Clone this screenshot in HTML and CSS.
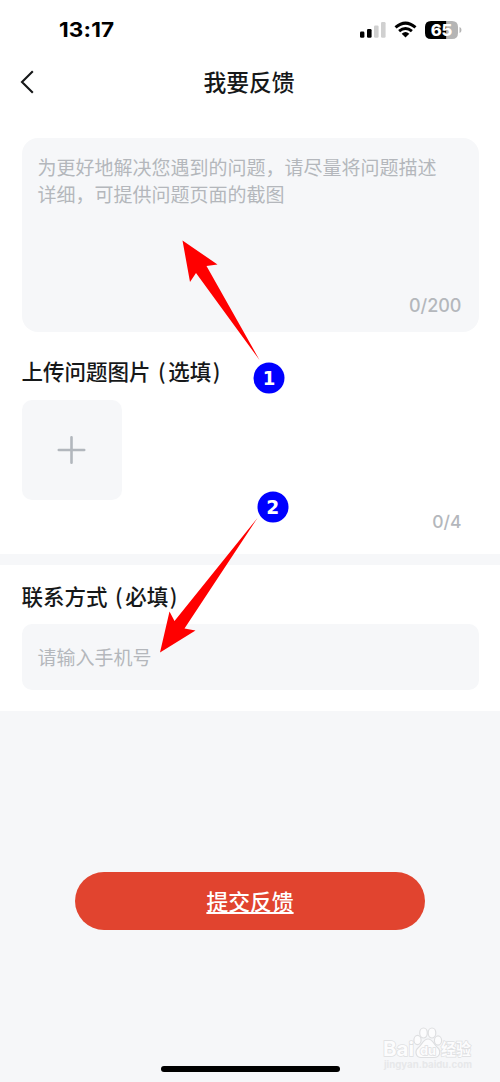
FILE: index.html
```html
<!DOCTYPE html>
<html lang="zh-CN">
<head>
<meta charset="utf-8">
<title>我要反馈</title>
<link rel="stylesheet" href="styles.css">
</head>
<body>
<main class="screen">
  <div class="status-bar">
    <span class="time">13:17</span>
    <svg class="status-icons" width="106" height="24" viewBox="0 0 106 24">
      <rect x="0" y="13.5" width="4.4" height="6.3" rx="1.3" fill="#000"/>
      <rect x="7" y="11" width="4.6" height="8.8" rx="1.3" fill="#000"/>
      <rect x="14" y="7.5" width="4.6" height="12.3" rx="1.3" fill="#d0d0d0"/>
      <rect x="21" y="4" width="4.6" height="15.8" rx="1.3" fill="#d0d0d0"/>
      <path d="M35.5 9.4Q45.5 .8 55.5 9.4M39.1 13.2Q45.5 7.9 51.9 13.2" fill="none" stroke="#000" stroke-width="3"/>
      <path d="M41.7 15.8Q45.5 12.4 49.3 15.8L45.5 19.6Z" fill="#000"/>
      <path d="M71 3H86.5V21H71Q65 21 65 15V9Q65 3 71 3Z" fill="#000"/>
      <path d="M86.5 3H92Q98 3 98 9V15Q98 21 92 21H86.5Z" fill="#b5b5b5"/>
      <path d="M99.5 9Q101.5 9.5 101.5 12T99.5 15Z" fill="#b5b5b5"/>
      <text class="battery-level" x="81.5" y="17.6" text-anchor="middle">65</text>
    </svg>
  </div>
  <header class="nav">
    <svg class="back" width="18" height="26" viewBox="0 0 18 26"><path d="M14.8 2.2L4 13L14.8 23.8" fill="none" stroke="#161819" stroke-width="2.1"/></svg>
    <h1 class="title">我要反馈</h1>
  </header>
  <section class="feedback">
    <div class="textarea">
      <p class="placeholder">为更好地解决您遇到的问题，请尽量将问题描述详细，可提供问题页面的截图</p>
      <span class="counter">0/200</span>
    </div>
    <h2 class="heading">上传问题图片<span class="paren-open">(</span>选填<span class="paren-close">)</span></h2>
    <div class="upload">
      <svg width="30" height="30" viewBox="0 0 30 30"><path d="M14.5 2.3V27.7M1.8 15H27.2" fill="none" stroke="#b2b7bd" stroke-width="2.6" stroke-linecap="round"/></svg>
    </div>
    <div class="image-count">0/4</div>
  </section>
  <section class="contact">
    <h2 class="heading">联系方式<span class="paren-open">(</span>必填<span class="paren-close">)</span></h2>
    <div class="phone">请输入手机号</div>
  </section>
  <footer class="footer">
    <a class="submit">提交反馈</a>
    <div class="home-indicator"></div>
  </footer>
  <svg class="annotations" width="500" height="1082" viewBox="0 0 500 1082">
    <path d="M259.5 360L206.5 266L217.5 264.5L182.5 240.5L190 282L196 273Z" fill="#f00"/>
    <path d="M257.5 518L174.5 621L169.5 611.5L160 652.5L195.5 630.5L184.5 628.5Z" fill="#f00"/>
    <circle cx="269" cy="378" r="15.5" fill="#00f"/>
    <circle cx="273" cy="507" r="15.5" fill="#00f"/>
    <text class="marker" x="262.8" y="385" textLength="12.6" lengthAdjust="spacingAndGlyphs">1</text>
    <text class="marker" x="266.3" y="514" textLength="13" lengthAdjust="spacingAndGlyphs">2</text>
  </svg>
  <svg class="watermark" width="112" height="56" viewBox="0 0 112 56">
    <g fill="#fcfcfd" stroke="#dedfe1" stroke-width="1.2">
      <ellipse cx="46.5" cy="20" rx="3.6" ry="4.6"/>
      <ellipse cx="52.5" cy="13" rx="3.8" ry="5"/>
      <ellipse cx="61" cy="13" rx="3.8" ry="5"/>
      <ellipse cx="67" cy="20.5" rx="3.6" ry="4.6"/>
      <path d="M57 19C52 19 51 25 47.5 27.5C43 31 45 37.5 50 37.5H63C69 37.5 70.5 31 66.5 27.5C63 25 62 19 57 19Z"/>
      <g class="watermark-text">
        <text class="wm-logo" x="12" y="36" textLength="31" lengthAdjust="spacingAndGlyphs">Bai</text>
        <text class="wm-du" x="49" y="35" textLength="16" lengthAdjust="spacingAndGlyphs">du</text>
        <text class="wm-name" x="70" y="35" textLength="30" lengthAdjust="spacingAndGlyphs">经验</text>
      </g>
    </g>
    <text class="wm-url" x="13" y="47.5" textLength="88" lengthAdjust="spacingAndGlyphs">jingyan.baidu.com</text>
  </svg>
</main>
</body>
</html>
```
FILE: styles.css
```css
* { box-sizing: border-box; }
body {
  margin: 0;
  background: #fff;
  font-family: "Noto Sans CJK SC", sans-serif;
}
h1, h2, p { margin: 0; }
.screen {
  position: relative;
  width: 500px;
  height: 1082px;
  display: flex;
  flex-direction: column;
  overflow: hidden;
  background: #fff;
}
.status-bar {
  height: 60px;
  padding: 0 34px 0 59px;
  display: flex;
  align-items: center;
  justify-content: space-between;
}
.time {
  font: 700 20.5px/24px Inter, sans-serif;
  letter-spacing: 0.1px;
  color: #000;
  transform: scaleX(1.1);
  transform-origin: left center;
}
.battery-level {
  font: 800 16.5px Inter, sans-serif;
  fill: #fff;
}
.nav {
  height: 78px;
  padding: 9px 20px 0 18px;
  display: grid;
  grid-template-columns: 18px 1fr 18px;
  align-items: start;
}
.title {
  font-size: 22.8px;
  line-height: 26px;
  font-weight: 500;
  color: #161819;
  text-align: center;
}
.feedback {
  height: 416px;
  padding: 0 21.5px;
}
.textarea {
  height: 194px;
  padding: 15px 17px 13px 16px;
  border-radius: 16px;
  background: #f6f7f9;
  display: flex;
  flex-direction: column;
  justify-content: space-between;
}
.placeholder {
  font-size: 19px;
  line-height: 27px;
  color: #b4b7bc;
  width: 404px;
}
.counter {
  align-self: flex-end;
  font: 500 18px/27px Inter, sans-serif;
  color: #b4b7bc;
}
.heading {
  font-size: 21.5px;
  line-height: 32px;
  font-weight: 500;
  color: #161819;
}
.paren-open { margin-left: 7.5px; margin-right: 2.5px; }
.paren-close { margin-left: 1.5px; }
.feedback .heading { margin-top: 23px; }
.upload {
  width: 100px;
  height: 100px;
  margin-top: 13px;
  border-radius: 10px;
  background: #f6f7f9;
  display: flex;
  align-items: center;
  justify-content: center;
}
.image-count {
  margin-top: 10px;
  padding-right: 17px;
  text-align: right;
  font: 500 17.5px/24px Inter, sans-serif;
  color: #b4b7bc;
}
.contact {
  height: 157px;
  padding: 15px 21.5px 0;
  border-top: 11px solid #f6f7f9;
}
.phone {
  height: 66px;
  margin-top: 12px;
  padding: 0 16px;
  border-radius: 10px;
  background: #f6f7f9;
  color: #b4b7bc;
  font-size: 19px;
  line-height: 66px;
}
.footer {
  flex: 1;
  padding: 161px 0 10px;
  display: flex;
  flex-direction: column;
  align-items: center;
  justify-content: space-between;
  background: #f6f7f9;
}
.submit {
  width: 350px;
  height: 58px;
  border-radius: 29px;
  background: #e1442f;
  color: #fff;
  font-size: 21.8px;
  line-height: 57px;
  font-weight: 500;
  text-align: center;
  text-decoration: underline;
  text-decoration-thickness: 1.5px;
  text-underline-offset: 2px;
}
.home-indicator {
  width: 179px;
  height: 6px;
  border-radius: 3px;
  background: #000;
}
.annotations {
  position: absolute;
  inset: 0;
}
.marker {
  font: 700 19.5px "DejaVu Sans", sans-serif;
  fill: #fff;
}
.watermark {
  position: absolute;
  left: 371px;
  top: 1020px;
}
.watermark-text { stroke-width: 1.4px; paint-order: stroke; }
.wm-logo { font: 700 20px Inter, sans-serif; }
.wm-du { font: 700 12px Inter, sans-serif; }
.wm-name { font: 700 15.5px "Noto Sans CJK SC", sans-serif; }
.wm-url { font: 700 9.5px Inter, sans-serif; fill: #e7e8ea; }
```
